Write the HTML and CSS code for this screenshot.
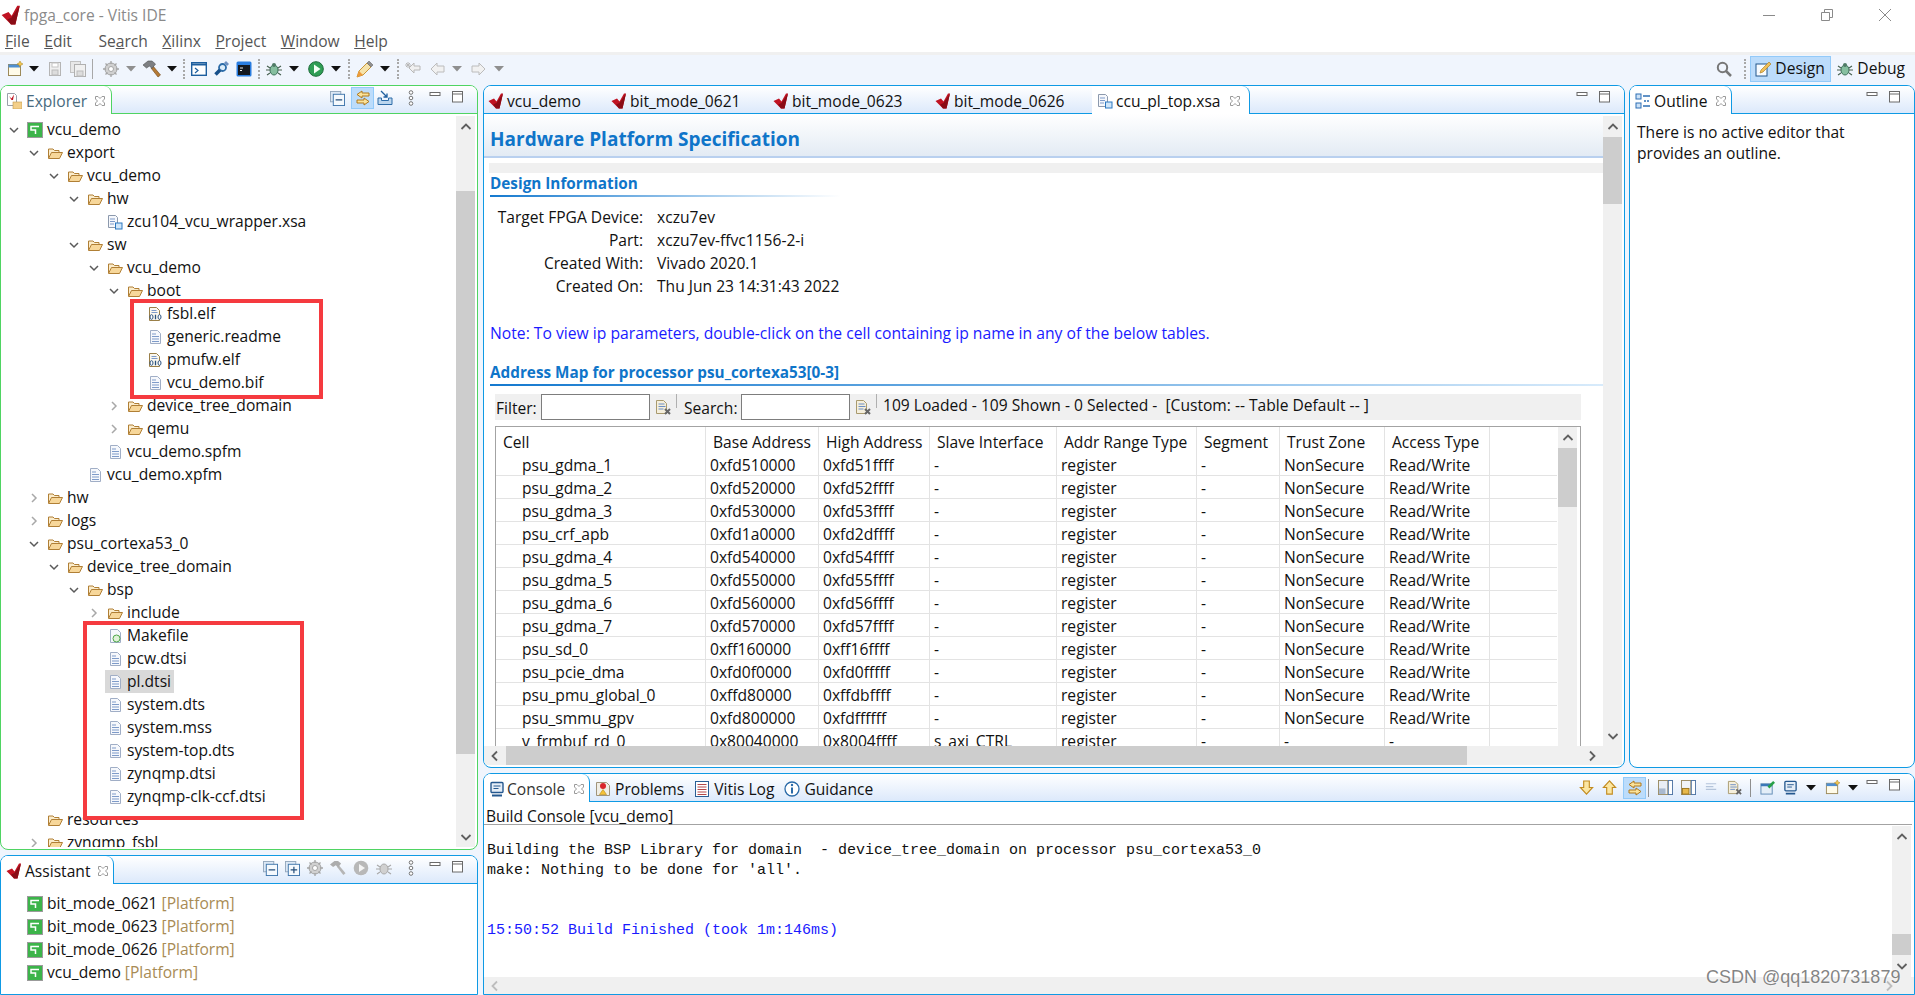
FILE: index.html
```html
<!DOCTYPE html>
<html lang="en">
<head>
<meta charset="utf-8">
<title>fpga_core - Vitis IDE</title>
<link rel="stylesheet" href="styles.css">
</head>
<body>
<svg class="defs" xmlns="http://www.w3.org/2000/svg">
<symbol id="xil" viewBox="0 0 16 16"><path d="M.5 8L6 5.500l2.500 3L13 .5h2L11.500 15.500H8z" fill="#c01322"/><path d="M15 .5L11.500 15.500H8L5 11.500l3.500-1.500z" fill="#8a0c16"/></symbol>
<symbol id="folder" viewBox="0 0 16 16"><path d="M1.500 13V4h4.500l1.500 1.500H12V7" fill="#fbeccb" stroke="#b07f35"/><path d="M1.500 13.500L4.500 7.500h11l-3 6z" fill="#f7d79a" stroke="#b07f35"/></symbol>
<symbol id="file" viewBox="0 0 16 16"><path d="M3.500 1.500h7l3 3v10h-10z" fill="#f6f8fc" stroke="#a0aec6"/><path d="M5 5h4M5 7.500h7M5 10h7M5 12.500h7" stroke="#7e9bc9"/></symbol>
<symbol id="elf" viewBox="0 0 16 16"><path d="M2.500 1.500h7l3 3v10h-10z" fill="#fbf8ef" stroke="#9a7f48"/><path d="M4.500 4.500h5M4.500 6.500h6" stroke="#7e9bc9"/><ellipse cx="4.500" cy="11" rx="1.500" ry="2.300" fill="#fff" stroke="#27507f"/><path d="M8.500 8.700v4.600" stroke="#27507f" stroke-width="1.300"/><ellipse cx="12.500" cy="11" rx="1.500" ry="2.300" fill="#fff" stroke="#27507f"/></symbol>
<symbol id="xsa" viewBox="0 0 16 16"><path d="M1.500 1.500h7l2 2v10h-9z" fill="#f6f8fc" stroke="#8c99ad"/><path d="M3 5h5M3 7.500h5M3 10h4" stroke="#7e9bc9"/><rect x="8.500" y="9" width="6.500" height="6" fill="#cfe6fa" stroke="#2c78c0"/></symbol>
<symbol id="make" viewBox="0 0 16 16"><path d="M3.500 1.500h7l3 3v10h-10z" fill="#f6f8fc" stroke="#a0aec6"/><circle cx="9.500" cy="10.500" r="3.500" fill="#dff2d8" stroke="#4fa64a"/></symbol>
<symbol id="plat" viewBox="0 0 16 16"><rect x=".5" y=".5" width="15" height="15" fill="#3cb44a" stroke="#9b9b9b"/><path d="M12 4.500H4v3.500h4.500v4" fill="none" stroke="#fff" stroke-width="1.500"/></symbol>
<symbol id="dn" viewBox="0 0 12 12"><path d="M2 4l4 4 4-4" fill="none" stroke="#5a5a5a" stroke-width="1.500"/></symbol>
<symbol id="rt" viewBox="0 0 12 12"><path d="M4 2l4 4-4 4" fill="none" stroke="#a8a8a8" stroke-width="1.500"/></symbol>
<symbol id="sup" viewBox="0 0 12 12"><path d="M1.500 8L6 3.500 10.500 8" fill="none" stroke="#606060" stroke-width="1.800"/></symbol>
<symbol id="sdn" viewBox="0 0 12 12"><path d="M1.500 4L6 8.500 10.500 4" fill="none" stroke="#606060" stroke-width="1.800"/></symbol>
<symbol id="slt" viewBox="0 0 12 12"><path d="M8 1.500L3.500 6 8 10.500" fill="none" stroke="#606060" stroke-width="1.800"/></symbol>
<symbol id="srt" viewBox="0 0 12 12"><path d="M4 1.500L8.500 6 4 10.500" fill="none" stroke="#606060" stroke-width="1.800"/></symbol>
<symbol id="close" viewBox="0 0 12 12"><path d="M1.500 1.500h2.500L6 3.500l2-2h2.500v2.500l-2 2 2 2v2.500H8l-2-2-2 2H1.500V8l2-2-2-2z" fill="#fff" stroke="#9a9a9a"/></symbol>
<symbol id="min" viewBox="0 0 12 12"><rect x="1" y="1.500" width="10" height="3" fill="#fff" stroke="#6a6a6a"/></symbol>
<symbol id="max" viewBox="0 0 12 12"><rect x=".5" y=".5" width="10" height="10.500" fill="#fff" stroke="#6a6a6a"/><path d="M.5 3h10" stroke="#6a6a6a"/></symbol>
<symbol id="drop" viewBox="0 0 10 6"><path d="M0 0h10L5 5.500z" fill="#111"/></symbol>
<symbol id="dropg" viewBox="0 0 10 6"><path d="M0 0h10L5 5.500z" fill="#8f8f8f"/></symbol>
<symbol id="new" viewBox="0 0 16 16"><rect x="1.500" y="3.500" width="12" height="11" fill="#fffbe9" stroke="#9c8a5a"/><rect x="1.500" y="3.500" width="12" height="3" fill="#4f8fd0"/><path d="M13 0l1 2 2 1-2 1-1 2-1-2-2-1 2-1z" fill="#f4c64d" stroke="#a9801d" stroke-width=".5"/></symbol>
<symbol id="save" viewBox="0 0 16 16"><rect x="2.500" y="1.500" width="11" height="13" fill="#f0f0f0" stroke="#b5b5b5"/><rect x="5" y="2" width="6" height="4" fill="#fff" stroke="#c4c4c4"/><rect x="5" y="9" width="6" height="5" fill="#ddd" stroke="#bbb"/></symbol>
<symbol id="saveall" viewBox="0 0 16 16"><rect x=".5" y=".5" width="10" height="11" fill="#e8e8e8" stroke="#c2c2c2"/><rect x="4.500" y="3.500" width="11" height="12" fill="#f0f0f0" stroke="#b0b0b0"/><rect x="7" y="10" width="6" height="5" fill="#ddd" stroke="#bbb"/></symbol>
<symbol id="cog" viewBox="0 0 16 16"><circle cx="8" cy="8" r="6" fill="#d0d0d0" stroke="#a5a5a5"/><circle cx="8" cy="8" r="2.500" fill="#fff" stroke="#a5a5a5"/><path d="M8 0v3M8 13v3M0 8h3M13 8h3M2.500 2.500l2 2M11.500 11.500l2 2M13.500 2.500l-2 2M4.500 11.500l-2 2" stroke="#a5a5a5" stroke-width="1.300"/></symbol>
<symbol id="hammer" viewBox="0 0 18 18"><path d="M8 8l7 9 2.500-2L10 6z" fill="#b57a35" stroke="#6e4716" stroke-width=".6"/><path d="M0 5l5-4h4l3.500 3-3.500 4.500L6.500 6 3.500 8z" fill="#7d7f82" stroke="#4f5153" stroke-width=".6"/></symbol>
<symbol id="hammerg" viewBox="0 0 18 18"><path d="M8 8l7 9 2.500-2L10 6z" fill="#b5b5b5"/><path d="M0 5l5-4h4l3.500 3-3.500 4.500L6.500 6 3.500 8z" fill="#adadad"/></symbol>
<symbol id="term" viewBox="0 0 16 16"><rect x=".7" y="1.700" width="14.600" height="12.600" fill="#fff" stroke="#1e5f9f" stroke-width="1.400"/><path d="M1 3.500h14" stroke="#1e5f9f" stroke-width="2"/><path d="M4 7l3 2.500L4 12" fill="none" stroke="#1e5f9f" stroke-width="1.200"/></symbol>
<symbol id="conn" viewBox="0 0 16 16"><path d="M9 3l4 4" stroke="#7d8fd0" stroke-width="2"/><circle cx="9.500" cy="6.500" r="3.500" fill="#dcecf9" stroke="#2d6ca8" stroke-width="1.800"/><path d="M7 9l-4.500 4.500" stroke="#17508a" stroke-width="3.500"/><path d="M11 2l2-2 3 3-2 2z" fill="#6d8fc0"/></symbol>
<symbol id="xsct" viewBox="0 0 16 16"><rect x=".5" y=".5" width="15" height="15" rx="1.500" fill="#2a7de0"/><rect x="2" y="4" width="12" height="10" fill="#14181f"/><path d="M4 7h3M4 9.500h2" stroke="#eee"/></symbol>
<symbol id="bug" viewBox="0 0 16 16"><ellipse cx="8" cy="9" rx="4" ry="5" fill="#86bfa0" stroke="#3a6f58"/><circle cx="8" cy="4" r="2" fill="#4f7a66"/><path d="M1 5l3 2M15 5l-3 2M0 9h4M16 9h-4M1 14l3-2M15 14l-3-2" stroke="#46604f" stroke-width="1.100"/></symbol>
<symbol id="bugg" viewBox="0 0 16 16"><ellipse cx="8" cy="9" rx="4" ry="5" fill="#d0d0d0" stroke="#a8a8a8"/><path d="M1 5l3 2M15 5l-3 2M0 9h4M16 9h-4M1 14l3-2M15 14l-3-2" stroke="#a8a8a8" stroke-width="1.100"/></symbol>
<symbol id="play" viewBox="0 0 16 16"><circle cx="8" cy="8" r="7.300" fill="#2f9e55" stroke="#1d6b3a"/><path d="M6 3.500l6.500 4.500L6 12.500z" fill="#f4fff6"/></symbol>
<symbol id="playg" viewBox="0 0 16 16"><circle cx="8" cy="8" r="7.300" fill="#b8b8b8"/><path d="M6 4l6 4-6 4z" fill="#f4f4f4"/></symbol>
<symbol id="pin" viewBox="0 0 18 18"><path d="M1 17l2-6L11 3l4 4-8 8z" fill="#f6e3ab" stroke="#c8973a"/><path d="M11 3l2-2 4 4-2 2z" fill="#8f8f8f" stroke="#6a6a6a" stroke-width=".6"/><path d="M1 17l2-6 4 4z" fill="#ef9a3a"/></symbol>
<symbol id="backed" viewBox="0 0 16 16"><path d="M15 5H9V2L4 7l5 5V9h6z" fill="#f0f0f0" stroke="#b8b8b8"/><path d="M3 1v6M0 4h6M1 2l4 4M5 2L1 6" stroke="#b8b8b8"/></symbol>
<symbol id="left" viewBox="0 0 16 16"><path d="M15 5H8V2L2 8l6 6v-3h7z" fill="#f1f1f1" stroke="#bcbcbc"/></symbol>
<symbol id="right" viewBox="0 0 16 16"><path d="M1 5h7V2l6 6-6 6v-3H1z" fill="#f1f1f1" stroke="#bcbcbc"/></symbol>
<symbol id="search" viewBox="0 0 16 16"><circle cx="6.500" cy="6.500" r="4.700" fill="none" stroke="#777" stroke-width="2"/><path d="M10 10l5 5" stroke="#777" stroke-width="2.500"/></symbol>
<symbol id="design" viewBox="0 0 16 16"><rect x="1" y="3" width="11" height="12" fill="#f7fbff" stroke="#22578c"/><path d="M14 1l2 2-8 8-3 1 1-3z" fill="#f0c05a" stroke="#b08226" stroke-width=".7"/></symbol>
<symbol id="expl" viewBox="0 0 16 16"><path d="M1.500 .5h7l2 2v10h-9z" fill="#fff" stroke="#9aa0aa"/><path d="M3 3l2.500 2.500L8 1.500 7 7H5.500z" fill="#c0101f"/><rect x="7" y="9" width="9" height="7" fill="#f3cf8a" stroke="#c39a4a" stroke-width=".6"/></symbol>
<symbol id="outl" viewBox="0 0 16 16"><rect x="1" y="1" width="5" height="5" fill="#cde2f7" stroke="#2e6fb4"/><rect x="1" y="10" width="5" height="5" fill="#cde2f7" stroke="#2e6fb4"/><path d="M8 3h7M9 8h2M12 8h2M8 13h7" stroke="#2e6fb4" stroke-width="1.300"/></symbol>
<symbol id="collapse" viewBox="0 0 16 16"><rect x=".5" y=".5" width="11" height="11" fill="#dce8f5" stroke="#93a7bd"/><rect x="3.500" y="3.500" width="12" height="12" fill="#f5f9fd" stroke="#3f75ab"/><path d="M6 9.500h7" stroke="#244e7a" stroke-width="1.300"/></symbol>
<symbol id="expand" viewBox="0 0 16 16"><rect x=".5" y=".5" width="11" height="11" fill="#dce8f5" stroke="#93a7bd"/><rect x="3.500" y="3.500" width="12" height="12" fill="#f5f9fd" stroke="#3f75ab"/><path d="M6 9.500h7M9.500 6v7" stroke="#244e7a" stroke-width="1.300"/></symbol>
<symbol id="sync" viewBox="0 0 16 16"><path d="M7 1L2 4.500 7 8V6h7V3H7z" fill="#fae29a" stroke="#b0781c"/><path d="M9 8l5 3.500L9 15v-2H2v-3h7z" fill="#fae29a" stroke="#b0781c"/></symbol>
<symbol id="link" viewBox="0 0 16 16"><path d="M1 8v6.500h14V8h-3.500v2.500h-7V8z" fill="#bcd6ee" stroke="#2d6ca8"/><path d="M4 1l6 6M10 3.500V7H6.500" fill="none" stroke="#1e5f9f" stroke-width="1.300"/></symbol>
<symbol id="dots" viewBox="0 0 6 16"><circle cx="3" cy="2.500" r="1.800" fill="#fff" stroke="#757575"/><circle cx="3" cy="8" r="1.800" fill="#fff" stroke="#757575"/><circle cx="3" cy="13.500" r="1.800" fill="#fff" stroke="#757575"/></symbol>
<symbol id="console" viewBox="0 0 16 16"><rect x="2" y="1.500" width="12" height="10" rx="1" fill="#e4edf7" stroke="#24588f" stroke-width="1.400"/><path d="M4.500 5h7M4.500 7.500h5" stroke="#24588f"/><path d="M3 14.500h10" stroke="#24588f" stroke-width="2"/></symbol>
<symbol id="problems" viewBox="0 0 16 16"><path d="M1.500 1.500h10l3 3v10h-13z" fill="#f0eee6" stroke="#a0947a"/><circle cx="8" cy="5" r="3" fill="#d8262c"/><path d="M4.500 13.500l3.500-5 3.500 5z" fill="#f5c237" stroke="#b98a10" stroke-width=".6"/></symbol>
<symbol id="log" viewBox="0 0 16 16"><rect x="1.500" y=".5" width="13" height="15" fill="#fff" stroke="#2a5f95"/><path d="M3.500 3.500h9M3.500 6h9M3.500 8.500h9M3.500 11h9M3.500 13.500h9" stroke="#b4484a"/></symbol>
<symbol id="info" viewBox="0 0 16 16"><circle cx="8" cy="8" r="7" fill="#fff" stroke="#2a6aa8" stroke-width="1.300"/><path d="M8 6.500V12.500" stroke="#2a6aa8" stroke-width="2"/><circle cx="8" cy="4" r="1.200" fill="#2a6aa8"/></symbol>
<symbol id="clear" viewBox="0 0 16 16"><path d="M1.500 1.500h7l3 3v10h-10z" fill="#f5efdc" stroke="#a99a6e"/><path d="M3.500 5h6M3.500 7.500h7M3.500 10h5" stroke="#6d8fc4"/><path d="M10 10l5 5M15 10l-5 5" stroke="#666" stroke-width="2"/></symbol>
<symbol id="adn" viewBox="0 0 16 16"><path d="M5 1h6v7h3.500L8 15 1.500 8H5z" fill="#fbe6a2" stroke="#c28b1f" stroke-width="1.200"/></symbol>
<symbol id="aup" viewBox="0 0 16 16"><path d="M5 15h6V8h3.500L8 1 1.500 8H5z" fill="#fbe6a2" stroke="#c28b1f" stroke-width="1.200"/></symbol>
<symbol id="cons1" viewBox="0 0 16 16"><rect x=".5" y=".5" width="10" height="15" fill="#e9eef5" stroke="#9a8a60"/><rect x="11" y=".5" width="4.500" height="15" fill="#fff" stroke="#4e74a4"/><rect x="1" y="9" width="7" height="6" fill="#a9b9cf"/></symbol>
<symbol id="cons2" viewBox="0 0 16 16"><rect x=".5" y=".5" width="10" height="15" fill="#f1f4f8" stroke="#9a8a60"/><rect x="11" y=".5" width="4.500" height="15" fill="#fff" stroke="#4e74a4"/><rect x="1.500" y="9" width="7" height="6" fill="#e7b84a" stroke="#9c741a"/></symbol>
<symbol id="lines" viewBox="0 0 16 16"><path d="M2 4h11M2 7h8M2 10h11" stroke="#b4c4da" stroke-width="1.200"/></symbol>
<symbol id="pinc" viewBox="0 0 16 16"><rect x="1" y="4" width="12" height="11" fill="#e4eef8" stroke="#5e89b4"/><path d="M1 5.500h12" stroke="#3b78b8" stroke-width="2.500"/><path d="M8 7l6-6 2 2-6 6z" fill="#27a047"/></symbol>
</svg>

<div class="app">
  <header class="titlebar">
    <svg class="logo"><use href="#xil"/></svg>
    <span class="title-text">fpga_core - Vitis IDE</span>
    <div class="winbtns">
      <svg class="winbtn"><path d="M0 6.500h12" stroke="#8a8a8a"/></svg>
      <svg class="winbtn"><path d="M.5 3.500h8v8h-8zM3.500 3V.5h8v8H9" fill="none" stroke="#8a8a8a"/></svg>
      <svg class="winbtn"><path d="M0 0l12 12M12 0L0 12" stroke="#8a8a8a"/></svg>
    </div>
  </header>
  <nav class="menubar">
    <span><u>F</u>ile</span><span><u>E</u>dit</span><span class="menu-gap">Se<u>a</u>rch</span><span><u>X</u>ilinx</span><span><u>P</u>roject</span><span><u>W</u>indow</span><span><u>H</u>elp</span>
  </nav>
  <div class="toolbar">
    <svg class="i16"><use href="#new"/></svg><svg class="dr"><use href="#drop"/></svg>
    <svg class="i16 a2"><use href="#save"/></svg><svg class="i16 a1"><use href="#saveall"/></svg>
    <i class="sepl"></i>
    <svg class="i16 a4"><use href="#cog"/></svg><svg class="dr a1"><use href="#dropg"/></svg>
    <svg class="i18 a1"><use href="#hammer"/></svg><svg class="dr"><use href="#drop"/></svg>
    <i class="dotsep"></i>
    <svg class="i16"><use href="#term"/></svg><svg class="i16"><use href="#conn"/></svg><svg class="i16 a1"><use href="#xsct"/></svg>
    <i class="dotsep"></i>
    <svg class="i16"><use href="#bug"/></svg><svg class="dr a1"><use href="#drop"/></svg>
    <svg class="i16 a3"><use href="#play"/></svg><svg class="dr a1"><use href="#drop"/></svg>
    <i class="dotsep a1"></i>
    <svg class="i18"><use href="#pin"/></svg><svg class="dr"><use href="#drop"/></svg>
    <i class="dotsep a1"></i>
    <svg class="i16"><use href="#backed"/></svg><svg class="i16 a2"><use href="#left"/></svg><svg class="dr a1"><use href="#dropg"/></svg>
    <svg class="i16 a3"><use href="#right"/></svg><svg class="dr a1"><use href="#dropg"/></svg>
    <div class="persp">
      <svg class="i16"><use href="#search"/></svg>
      <i class="dotsep"></i>
      <div class="pbtn on"><svg class="i16"><use href="#design"/></svg>Design</div>
      <div class="pbtn"><svg class="i16"><use href="#bug"/></svg>Debug</div>
    </div>
  </div>

  <main class="workbench">
    <div class="leftcol">
      <section class="panel green explorer">
        <div class="tabs">
          <div class="tab on t-expl"><svg class="i16"><use href="#expl"/></svg><span class="muted">Explorer</span><svg class="cl"><use href="#close"/></svg></div>
          <div class="viewbar vb-expl">
            <svg class="i14"><use href="#collapse"/></svg>
            <span class="hl"><svg class="i16"><use href="#sync"/></svg></span>
            <svg class="i16"><use href="#link"/></svg>
            <svg class="vdots"><use href="#dots"/></svg>
            <svg class="mm"><use href="#min"/></svg><svg class="mm"><use href="#max"/></svg>
          </div>
        </div>
        <div class="split">
          <div class="tree">
            <div class="row l0"><svg class="chev"><use href="#dn"/></svg><span class="item"><svg class="i16"><use href="#plat"/></svg>vcu_demo</span></div>
            <div class="row l1"><svg class="chev"><use href="#dn"/></svg><span class="item"><svg class="i16"><use href="#folder"/></svg>export</span></div>
            <div class="row l2"><svg class="chev"><use href="#dn"/></svg><span class="item"><svg class="i16"><use href="#folder"/></svg>vcu_demo</span></div>
            <div class="row l3"><svg class="chev"><use href="#dn"/></svg><span class="item"><svg class="i16"><use href="#folder"/></svg>hw</span></div>
            <div class="row l4"><i class="chev"></i><span class="item"><svg class="i16"><use href="#xsa"/></svg>zcu104_vcu_wrapper.xsa</span></div>
            <div class="row l3"><svg class="chev"><use href="#dn"/></svg><span class="item"><svg class="i16"><use href="#folder"/></svg>sw</span></div>
            <div class="row l4"><svg class="chev"><use href="#dn"/></svg><span class="item"><svg class="i16"><use href="#folder"/></svg>vcu_demo</span></div>
            <div class="row l5"><svg class="chev"><use href="#dn"/></svg><span class="item"><svg class="i16"><use href="#folder"/></svg>boot</span></div>
            <div class="row l6"><i class="chev"></i><span class="item"><svg class="i16"><use href="#elf"/></svg>fsbl.elf</span></div>
            <div class="row l6"><i class="chev"></i><span class="item"><svg class="i16"><use href="#file"/></svg>generic.readme</span></div>
            <div class="row l6"><i class="chev"></i><span class="item"><svg class="i16"><use href="#elf"/></svg>pmufw.elf</span></div>
            <div class="row l6"><i class="chev"></i><span class="item"><svg class="i16"><use href="#file"/></svg>vcu_demo.bif</span></div>
            <div class="row l5"><svg class="chev"><use href="#rt"/></svg><span class="item"><svg class="i16"><use href="#folder"/></svg>device_tree_domain</span></div>
            <div class="row l5"><svg class="chev"><use href="#rt"/></svg><span class="item"><svg class="i16"><use href="#folder"/></svg>qemu</span></div>
            <div class="row l4"><i class="chev"></i><span class="item"><svg class="i16"><use href="#file"/></svg>vcu_demo.spfm</span></div>
            <div class="row l3"><i class="chev"></i><span class="item"><svg class="i16"><use href="#file"/></svg>vcu_demo.xpfm</span></div>
            <div class="row l1"><svg class="chev"><use href="#rt"/></svg><span class="item"><svg class="i16"><use href="#folder"/></svg>hw</span></div>
            <div class="row l1"><svg class="chev"><use href="#rt"/></svg><span class="item"><svg class="i16"><use href="#folder"/></svg>logs</span></div>
            <div class="row l1"><svg class="chev"><use href="#dn"/></svg><span class="item"><svg class="i16"><use href="#folder"/></svg>psu_cortexa53_0</span></div>
            <div class="row l2"><svg class="chev"><use href="#dn"/></svg><span class="item"><svg class="i16"><use href="#folder"/></svg>device_tree_domain</span></div>
            <div class="row l3"><svg class="chev"><use href="#dn"/></svg><span class="item"><svg class="i16"><use href="#folder"/></svg>bsp</span></div>
            <div class="row l4"><svg class="chev"><use href="#rt"/></svg><span class="item"><svg class="i16"><use href="#folder"/></svg>include</span></div>
            <div class="row l4"><i class="chev"></i><span class="item"><svg class="i16"><use href="#make"/></svg>Makefile</span></div>
            <div class="row l4"><i class="chev"></i><span class="item"><svg class="i16"><use href="#file"/></svg>pcw.dtsi</span></div>
            <div class="row l4"><i class="chev"></i><span class="item sel"><svg class="i16"><use href="#file"/></svg>pl.dtsi</span></div>
            <div class="row l4"><i class="chev"></i><span class="item"><svg class="i16"><use href="#file"/></svg>system.dts</span></div>
            <div class="row l4"><i class="chev"></i><span class="item"><svg class="i16"><use href="#file"/></svg>system.mss</span></div>
            <div class="row l4"><i class="chev"></i><span class="item"><svg class="i16"><use href="#file"/></svg>system-top.dts</span></div>
            <div class="row l4"><i class="chev"></i><span class="item"><svg class="i16"><use href="#file"/></svg>zynqmp.dtsi</span></div>
            <div class="row l4"><i class="chev"></i><span class="item"><svg class="i16"><use href="#file"/></svg>zynqmp-clk-ccf.dtsi</span></div>
            <div class="row l1"><i class="chev"></i><span class="item"><svg class="i16"><use href="#folder"/></svg>resources</span></div>
            <div class="row l1"><svg class="chev"><use href="#rt"/></svg><span class="item"><svg class="i16"><use href="#folder"/></svg>zynqmp_fsbl</span></div>
          </div>
          <div class="vsb vsb-expl">
            <div class="sb-btn"><svg class="sbi"><use href="#sup"/></svg></div>
            <div class="thumb"></div>
            <div class="sb-fill"></div>
            <div class="sb-btn"><svg class="sbi"><use href="#sdn"/></svg></div>
          </div>
        </div>
        <div class="redbox box-boot"></div>
        <div class="redbox box-bsp"></div>
      </section>

      <section class="panel assistant">
        <div class="tabs">
          <div class="tab on t-asst"><svg class="i16"><use href="#xil"/></svg><span>Assistant</span><svg class="cl"><use href="#close"/></svg></div>
          <div class="viewbar vb-asst">
            <svg class="i14"><use href="#collapse"/></svg>
            <svg class="i14"><use href="#expand"/></svg>
            <svg class="i16"><use href="#cog"/></svg>
            <svg class="i16"><use href="#hammerg"/></svg>
            <svg class="i16"><use href="#playg"/></svg>
            <svg class="i16"><use href="#bugg"/></svg>
            <svg class="vdots"><use href="#dots"/></svg>
            <svg class="mm"><use href="#min"/></svg><svg class="mm"><use href="#max"/></svg>
          </div>
        </div>
        <div class="asst-list">
          <div class="row l0"><i class="chev"></i><span class="item"><svg class="i16"><use href="#plat"/></svg><span>bit_mode_0621 <span class="tag">[Platform]</span></span></span></div>
          <div class="row l0"><i class="chev"></i><span class="item"><svg class="i16"><use href="#plat"/></svg><span>bit_mode_0623 <span class="tag">[Platform]</span></span></span></div>
          <div class="row l0"><i class="chev"></i><span class="item"><svg class="i16"><use href="#plat"/></svg><span>bit_mode_0626 <span class="tag">[Platform]</span></span></span></div>
          <div class="row l0"><i class="chev"></i><span class="item"><svg class="i16"><use href="#plat"/></svg><span>vcu_demo <span class="tag">[Platform]</span></span></span></div>
        </div>
      </section>
    </div>

    <div class="rightcol">
      <div class="toprow">
        <section class="panel editor">
          <div class="tabs">
            <div class="tab t-e1"><svg class="i16"><use href="#xil"/></svg>vcu_demo</div>
            <div class="tab t-e2"><svg class="i16"><use href="#xil"/></svg>bit_mode_0621</div>
            <div class="tab t-e2"><svg class="i16"><use href="#xil"/></svg>bit_mode_0623</div>
            <div class="tab t-e2"><svg class="i16"><use href="#xil"/></svg>bit_mode_0626</div>
            <div class="tab on t-e3"><svg class="i16"><use href="#xsa"/></svg>ccu_pl_top.xsa<svg class="cl"><use href="#close"/></svg></div>
            <div class="viewbar vb-min"><svg class="mm"><use href="#min"/></svg><svg class="mm"><use href="#max"/></svg></div>
          </div>
          <div class="ed-body">
            <div class="ed-main">
              <h1 class="ed-head">Hardware Platform Specification</h1>
              <div class="strip"></div>
              <h2 class="sect sect-short">Design Information</h2>
              <dl class="fields">
                <dt>Target FPGA Device:</dt><dd>xczu7ev</dd>
                <dt>Part:</dt><dd>xczu7ev-ffvc1156-2-i</dd>
                <dt>Created With:</dt><dd>Vivado 2020.1</dd>
                <dt>Created On:</dt><dd>Thu Jun 23 14:31:43 2022</dd>
              </dl>
              <p class="note">Note: To view ip parameters, double-click on the cell containing ip name in any of the below tables.</p>
              <h2 class="sect sect-long">Address Map for processor psu_cortexa53[0-3]</h2>
              <div class="filterbar">
                <label class="f-label">Filter:</label><input class="f-input" type="text"><svg class="i16"><use href="#clear"/></svg><i class="f-sep"></i>
                <label class="f-label">Search:</label><input class="f-input" type="text"><svg class="i16"><use href="#clear"/></svg><i class="f-sep"></i>
                <span class="f-status">109 Loaded - 109 Shown - 0 Selected -  [Custom: -- Table Default -- ]</span>
              </div>
              <div class="tblwrap">
                <table class="amap">
                  <colgroup><col class="c1"><col class="c2"><col class="c3"><col class="c4"><col class="c5"><col class="c6"><col class="c7"><col class="c8"><col class="c9"></colgroup>
                  <thead><tr><th>Cell</th><th>Base Address</th><th>High Address</th><th>Slave Interface</th><th>Addr Range Type</th><th>Segment</th><th>Trust Zone</th><th>Access Type</th><th></th></tr></thead>
                  <tbody>
                    <tr><td>psu_gdma_1</td><td>0xfd510000</td><td>0xfd51ffff</td><td>-</td><td>register</td><td>-</td><td>NonSecure</td><td>Read/Write</td><td></td></tr>
                    <tr><td>psu_gdma_2</td><td>0xfd520000</td><td>0xfd52ffff</td><td>-</td><td>register</td><td>-</td><td>NonSecure</td><td>Read/Write</td><td></td></tr>
                    <tr><td>psu_gdma_3</td><td>0xfd530000</td><td>0xfd53ffff</td><td>-</td><td>register</td><td>-</td><td>NonSecure</td><td>Read/Write</td><td></td></tr>
                    <tr><td>psu_crf_apb</td><td>0xfd1a0000</td><td>0xfd2dffff</td><td>-</td><td>register</td><td>-</td><td>NonSecure</td><td>Read/Write</td><td></td></tr>
                    <tr><td>psu_gdma_4</td><td>0xfd540000</td><td>0xfd54ffff</td><td>-</td><td>register</td><td>-</td><td>NonSecure</td><td>Read/Write</td><td></td></tr>
                    <tr><td>psu_gdma_5</td><td>0xfd550000</td><td>0xfd55ffff</td><td>-</td><td>register</td><td>-</td><td>NonSecure</td><td>Read/Write</td><td></td></tr>
                    <tr><td>psu_gdma_6</td><td>0xfd560000</td><td>0xfd56ffff</td><td>-</td><td>register</td><td>-</td><td>NonSecure</td><td>Read/Write</td><td></td></tr>
                    <tr><td>psu_gdma_7</td><td>0xfd570000</td><td>0xfd57ffff</td><td>-</td><td>register</td><td>-</td><td>NonSecure</td><td>Read/Write</td><td></td></tr>
                    <tr><td>psu_sd_0</td><td>0xff160000</td><td>0xff16ffff</td><td>-</td><td>register</td><td>-</td><td>NonSecure</td><td>Read/Write</td><td></td></tr>
                    <tr><td>psu_pcie_dma</td><td>0xfd0f0000</td><td>0xfd0fffff</td><td>-</td><td>register</td><td>-</td><td>NonSecure</td><td>Read/Write</td><td></td></tr>
                    <tr><td>psu_pmu_global_0</td><td>0xffd80000</td><td>0xffdbffff</td><td>-</td><td>register</td><td>-</td><td>NonSecure</td><td>Read/Write</td><td></td></tr>
                    <tr><td>psu_smmu_gpv</td><td>0xfd800000</td><td>0xfdffffff</td><td>-</td><td>register</td><td>-</td><td>NonSecure</td><td>Read/Write</td><td></td></tr>
                    <tr><td>v_frmbuf_rd_0</td><td>0x80040000</td><td>0x8004ffff</td><td>s_axi_CTRL</td><td>register</td><td>-</td><td>-</td><td>-</td><td></td></tr>
                  </tbody>
                </table>
                <div class="vsb vsb-tbl">
                  <div class="sb-btn"><svg class="sbi"><use href="#sup"/></svg></div>
                  <div class="thumb"></div>
                  <div class="sb-fill"></div>
                </div>
              </div>
            </div>
            <div class="vsb vsb-ed">
              <div class="sb-btn"><svg class="sbi"><use href="#sup"/></svg></div>
              <div class="thumb"></div>
              <div class="sb-fill"></div>
              <div class="sb-btn"><svg class="sbi"><use href="#sdn"/></svg></div>
            </div>
            <div class="hsb hsb-ed">
              <div class="sb-btn"><svg class="sbi"><use href="#slt"/></svg></div>
              <div class="thumb"></div>
              <div class="sb-fill"></div>
              <div class="sb-btn"><svg class="sbi"><use href="#srt"/></svg></div>
            </div>
            <div class="corner"></div>
          </div>
        </section>

        <section class="panel outline">
          <div class="tabs">
            <div class="tab on t-outl"><svg class="i16"><use href="#outl"/></svg>Outline<svg class="cl"><use href="#close"/></svg></div>
            <div class="viewbar vb-min"><svg class="mm"><use href="#min"/></svg><svg class="mm"><use href="#max"/></svg></div>
          </div>
          <p class="outl-msg">There is no active editor that provides an outline.</p>
        </section>
      </div>

      <section class="panel console">
        <div class="tabs">
          <div class="tab on t-cons"><svg class="i16"><use href="#console"/></svg><span class="muted2">Console</span><svg class="cl"><use href="#close"/></svg></div>
          <div class="tab t-c"><svg class="i16"><use href="#problems"/></svg>Problems</div>
          <div class="tab t-c"><svg class="i16"><use href="#log"/></svg>Vitis Log</div>
          <div class="tab t-c"><svg class="i16"><use href="#info"/></svg>Guidance</div>
          <div class="viewbar vb-cons">
            <svg class="i14"><use href="#adn"/></svg>
            <svg class="i14"><use href="#aup"/></svg>
            <span class="hl"><svg class="i16"><use href="#sync"/></svg></span>
            <i class="c-sep"></i>
            <svg class="i14"><use href="#cons1"/></svg>
            <svg class="i14"><use href="#cons2"/></svg>
            <svg class="i14"><use href="#lines"/></svg>
            <svg class="i14"><use href="#clear"/></svg>
            <i class="c-sep"></i>
            <svg class="i14"><use href="#pinc"/></svg>
            <svg class="i14"><use href="#console"/></svg><svg class="dr"><use href="#drop"/></svg>
            <svg class="i14"><use href="#new"/></svg><svg class="dr"><use href="#drop"/></svg>
            <svg class="mm"><use href="#min"/></svg><svg class="mm"><use href="#max"/></svg>
          </div>
        </div>
        <div class="c-name">Build Console [vcu_demo]</div>
        <div class="c-body">
          <pre class="c-text">Building the BSP Library for domain  - device_tree_domain on processor psu_cortexa53_0
make: Nothing to be done for 'all'.


<span class="c-blue">15:50:52 Build Finished (took 1m:146ms)</span></pre>
          <div class="vsb vsb-con">
            <div class="sb-btn"><svg class="sbi"><use href="#sup"/></svg></div>
            <div class="sb-gap"></div>
            <div class="thumb"></div>
            <div class="sb-btn"><svg class="sbi"><use href="#sdn"/></svg></div>
          </div>
          <div class="hsb hsb-con">
            <div class="sb-btn dis"><svg class="sbi"><use href="#slt"/></svg></div>
            <div class="sb-fill"></div>
            <div class="sb-btn dis"><svg class="sbi"><use href="#srt"/></svg></div>
          </div>
        </div>
      </section>
    </div>
  </main>
  <div class="watermark">CSDN @qq1820731879</div>
</div>
</body>
</html>
```
FILE: styles.css
```css
* { box-sizing: border-box; }
html, body { margin: 0; height: 100%; overflow: hidden; }
body { font: 15.6px/23px "Open Sans", "Noto Sans", sans-serif; color: #111; background: #fff; }
.defs { position: absolute; width: 0; height: 0; }
svg { display: block; flex: none; }

.app { position: relative; width: 1915px; height: 995px; display: flex; flex-direction: column; overflow: hidden; }

/* window chrome */
.titlebar { height: 26px; display: flex; align-items: center; padding: 4px 0 0 1px; }
.logo { width: 20px; height: 20px; margin-right: 3px; }
.title-text { color: #8a8a8a; }
.winbtns { margin-left: auto; display: flex; gap: 46px; padding-right: 24px; }
.winbtn { width: 12px; height: 12px; }
.menubar { height: 26px; display: flex; gap: 14.500px; align-items: center; padding: 4px 0 0 5px; color: #555; }
.menu-gap { margin-left: 12px; }

.toolbar { height: 33px; border-top: 3px solid #f0f0f0; background: #f0f5fd; display: flex; align-items: center; gap: 6px; padding: 0 0 3px 7px; }
.i16 { width: 16px; height: 16px; }
.i18 { width: 18px; height: 18px; }
.i14 { width: 15px; height: 15px; }
.dr { width: 10px; height: 6px; }
.a1 { margin-left: 1px; } .a2 { margin-left: 2px; } .a3 { margin-left: 3px; } .a4 { margin-left: 4px; }
.sepl { width: 1px; height: 20px; background: #a8a8a8; }
.dotsep { width: 2px; height: 20px; border-left: 2px dotted #a8a8a8; }
.persp { margin-left: auto; display: flex; align-items: center; gap: 4px; padding-right: 5px; }
.persp .dotsep { margin-left: 8px; }
.pbtn { display: flex; align-items: center; gap: 4px; height: 26px; padding: 0 4px; border: 1px solid transparent; color: #111; }
.pbtn + .pbtn { margin-left: -3px; }
.pbtn.on { background: #bcdcfb; border-color: #93caf9; width: 81px; gap: 4px; padding: 0 3px 0 4px; }

/* workbench */
.workbench { flex: 1; min-height: 0; display: grid; grid-template-columns: 478px 1fr; column-gap: 5px; background: #f0f5fd; }
.leftcol { display: flex; flex-direction: column; gap: 5px; min-height: 0; }
.rightcol { display: flex; flex-direction: column; gap: 5px; min-height: 0; min-width: 0; }
.toprow { height: 683px; display: grid; grid-template-columns: 1142px 1fr; column-gap: 4px; }

.panel { position: relative; display: flex; flex-direction: column; min-height: 0; border: 1px solid #0f9ae4; border-radius: 8px; overflow: hidden; background: #fff; }
.panel.green { border-color: #4fd462; }
.explorer { height: 765px; }
.assistant { flex: 1; border-bottom-left-radius: 0; border-bottom-right-radius: 0; }
.console { flex: 1; border-bottom-left-radius: 0; border-bottom-right-radius: 0; }

.tabs { height: 28px; flex: none; display: flex; background: linear-gradient(#fff, #dce9fb); border-bottom: 1px solid #0f9ae4; }
.green .tabs { border-bottom-color: #4fd462; }
.tab { display: flex; align-items: center; gap: 3px; height: 28px; white-space: nowrap; padding-left: 4px; padding-top: 2px; }
.tab.on { background: #fff; border-right: 1px solid #0f9ae4; border-radius: 0 8px 0 0; }
.green .tab.on { border-right-color: #4fd462; }
.cl { width: 12px; height: 12px; }
.muted { color: #486a7e; }
.muted2 { color: #333; }
.t-expl { width: 111px; gap: 4px; padding-left: 5px; }
.t-expl .cl { margin-left: 3px; }
.t-asst { width: 113px; gap: 3px; padding-left: 5px; }
.t-asst .cl { margin-left: 4px; }
.t-e1 { width: 122px; }
.t-e2 { width: 162px; padding-left: 5px; }
.t-e3 { width: 158px; padding-left: 5px; }
.t-e3 .cl { margin-left: 6px; }
.t-outl { width: 102px; padding-left: 5px; gap: 3px; }
.t-outl .cl { margin-left: 5px; }
.t-cons { width: 106px; padding-left: 5px; gap: 2px; }
.t-cons .cl { margin-left: 6px; }
.t-c { padding-left: 5px; margin-right: 5px; gap: 4px; }

.viewbar { margin-left: auto; display: flex; align-items: center; height: 24px; }
.mm { width: 12px; height: 12px; align-self: flex-start; margin-top: 5px; }
.hl { display: flex; align-items: center; justify-content: center; width: 23px; height: 22px; background: #bcdcfb; border: 1px solid #93caf9; }
.vdots { width: 6px; height: 16px; }
.vb-min { gap: 11px; padding-right: 13px; }
.vb-expl, .vb-asst { padding-right: 13px; }
.vb-expl .hl { margin-left: 6px; }
.vb-expl .hl + svg { margin-left: 3px; }
.vb-expl .vdots { margin: 0 15px 0 15px; }
.vb-expl .mm + .mm, .vb-asst .mm + .mm { margin-left: 11px; }
.vb-asst { gap: 7px; }
.vb-asst .vdots { margin: 0 8px 0 9px; }
.vb-asst .mm + .mm { margin-left: 4px; }
.vb-cons { gap: 8px; padding-right: 13px; height: 27px; }
.vb-cons .hl { margin-left: -2px; margin-right: -6px; }
.vb-cons .dr { margin-left: 0; margin-right: 1px; }
.vb-cons .dr + .mm { margin-left: -1px; }
.vb-cons .mm { margin-left: 3px; }
.c-sep { width: 1px; height: 18px; background: #8f8f8f; margin: 0 1px 0 0; }

/* tree */
.split { flex: 1; min-height: 0; display: flex; padding: 0 2px 2px 0; }
.tree { flex: 1; min-width: 0; overflow: hidden; padding-top: 4px; }
.row { height: 23px; display: flex; align-items: center; white-space: nowrap; }
.chev { width: 12px; height: 12px; flex: none; display: block; }
.item { display: flex; align-items: center; gap: 4px; height: 23px; margin-left: 5px; padding: 0 3px 0 2px; }
.sel { background: #d9d9d9; }
.l0 { padding-left: 7px; } .l1 { padding-left: 27px; } .l2 { padding-left: 47px; } .l3 { padding-left: 67px; }
.l4 { padding-left: 87px; } .l5 { padding-left: 107px; } .l6 { padding-left: 127px; }
.tag { color: #a88b55; }
.asst-list { padding-top: 8px; }

.redbox { position: absolute; border: 4px solid #f53a3f; pointer-events: none; }
.box-boot { left: 129px; top: 213px; width: 193px; height: 100px; }
.box-bsp { left: 82px; top: 535px; width: 221px; height: 199px; }

/* scrollbars */
.vsb { flex: none; width: 19px; display: flex; flex-direction: column; background: #f0f0f0; }
.hsb { display: flex; background: #f0f0f0; }
.sb-btn { flex: none; display: flex; align-items: center; justify-content: center; }
.vsb .sb-btn { height: 21px; }
.hsb .sb-btn { width: 22px; }
.sbi { width: 12px; height: 12px; }
.dis { opacity: .35; }
.thumb { background: #cdcdcd; flex: none; }
.sb-fill { flex: 1; }
.vsb-expl { margin-top: 2px; }
.vsb-expl .thumb { margin-top: 54px; height: 563px; }
.vsb-ed { margin-top: 2px; grid-column: 2; grid-row: 1; }
.vsb-ed .thumb { height: 67px; }
.vsb-tbl { margin-left: 1px; height: 325px; }
.vsb-tbl .thumb { height: 59px; }
.vsb-con { grid-column: 2; grid-row: 1; margin-top: 1px; }
.sb-gap { height: 87px; }
.vsb-con .thumb { height: 21px; }
.vsb-con .sb-btn:last-child { flex: 1; }

/* editor */
.ed-body { flex: 1; min-height: 0; display: grid; grid-template-columns: 1fr 19px; grid-template-rows: 1fr 19px; padding: 0 2px 2px 0; }
.ed-main { min-width: 0; overflow: hidden; grid-column: 1; grid-row: 1; }
.hsb-ed { grid-column: 1; grid-row: 2; }
.hsb-ed .thumb { width: 961px; }
.corner { grid-column: 2; grid-row: 2; background: #f0f0f0; }
.ed-head { margin: 0; height: 44px; font: 700 19px/50px "Open Sans", "Noto Sans", sans-serif; color: #0f75c9; padding-left: 6px; background: linear-gradient(#fff, #e3ebf4); border-bottom: 2px solid #b9d0ef; white-space: nowrap; }
.strip { height: 10px; margin: 5px 0 0 5px; background: #f0f0f0; }
.sect { margin: 0 0 0 6px; height: 24px; font: 700 15.300px/20px "Open Sans", "Noto Sans", sans-serif; color: #0f75c9; border-bottom: 2px solid; white-space: nowrap; }
.sect-short { width: 350px; border-image: linear-gradient(90deg, #1479cf, #fff) 1; }
.sect-long { margin-top: 17px; border-image: linear-gradient(90deg, #1479cf, #d8ebfb) 1; }
.fields { display: grid; grid-template-columns: 154px auto; column-gap: 14px; justify-content: start; margin: 9px 0 0 5px; }
.fields dt { text-align: right; }
.fields dd { margin: 0; }
.note { margin: 24px 0 0 6px; color: #1a1aff; white-space: nowrap; font-size: 15.700px; }
.filterbar { display: flex; align-items: center; height: 26px; margin: 8px 22px 0 11px; background: #f0f0f0; white-space: nowrap; }
.f-label { padding-left: 1px; width: 46px; padding-top: 2px; }
.f-label ~ .f-label { width: 58px; margin-left: 6px; }
.f-input { width: 109px; height: 26px; border: 1px solid #7d7d7d; background: #fff; margin: 0 5px 0 0; padding: 0; }
.f-sep { width: 1px; height: 14px; background: #b0b0b0; align-self: flex-start; margin-left: 5px; }
.f-status { white-space: pre; margin-left: 6px; padding-bottom: 4px; }
.tblwrap { display: flex; align-items: flex-start; height: 325px; margin: 6px 22px 0 11px; border: 1px solid #a3a3a3; border-bottom: 0; overflow: hidden; }
.amap { table-layout: fixed; border-collapse: separate; border-spacing: 0; width: 1061px; flex: none; }
.c1 { width: 210px; } .c2 { width: 113px; } .c3 { width: 111px; } .c4 { width: 127px; } .c5 { width: 140px; }
.c6 { width: 83px; } .c7 { width: 105px; } .c8 { width: 105px; } .c9 { width: 67px; }
.amap th { height: 26px; padding: 4px 0 0 7px; font-weight: 400; line-height: 22px; text-align: left; border-right: 1px solid #e3e3e3; white-space: nowrap; overflow: hidden; }
.amap td { height: 23px; padding: 2px 0 0 4px; line-height: 20px; border-right: 1px solid #e3e3e3; border-bottom: 1px solid #e3e3e3; white-space: nowrap; overflow: hidden; }
.amap th:last-child, .amap td:last-child { border-right: 0; }
.amap td:first-child { padding-left: 26px; }

/* outline */
.outl-msg { margin: 8px 0 0; padding-left: 7px; width: 240px; line-height: 21px; }

/* console */
.c-name { height: 23px; flex: none; padding: 4px 0 0 2px; margin-right: 2px; line-height: 20px; border-bottom: 1px solid #a3a3a3; }
.c-body { flex: 1; min-height: 0; display: grid; grid-template-columns: 1fr 19px 3px; grid-template-rows: 1fr 17px; }
.c-text { margin: 0; padding: 16px 0 0 3px; font: 15px/20px "Liberation Mono", monospace; grid-column: 1; grid-row: 1; overflow: hidden; }
.c-blue { color: #1a1aff; }
.hsb-con { grid-column: 1 / 4; grid-row: 2; padding-right: 14px; }

.watermark { position: absolute; left: 1706px; top: 965px; font: 18px/24px "Liberation Sans", sans-serif; color: rgba(110,110,110,.85); text-shadow: 0 0 2px #fff; white-space: nowrap; }
```
